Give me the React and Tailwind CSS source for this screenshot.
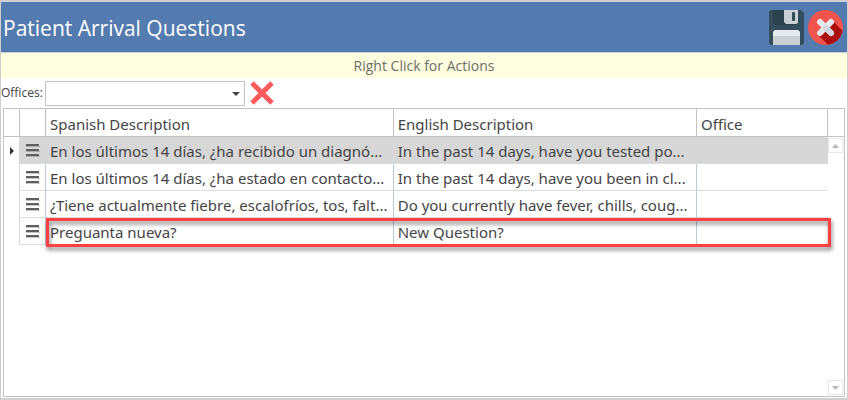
import { useState } from 'react';

const questions = [
  { id: 1, spanish: 'En los últimos 14 días, ¿ha recibido un diagnó...', english: 'In the past 14 days, have you tested po...', office: '' },
  { id: 2, spanish: 'En los últimos 14 días, ¿ha estado en contacto...', english: 'In the past 14 days, have you been in cl...', office: '' },
  { id: 3, spanish: '¿Tiene actualmente fiebre, escalofríos, tos, falt...', english: 'Do you currently have fever, chills, coug...', office: '' },
  { id: 4, spanish: 'Preguanta nueva?', english: 'New Question?', office: '', highlighted: true },
];

const SaveIcon = () => (
  <svg viewBox="0 0 35 35" className="block h-[35px] w-[35px]">
    <path d="M2 0H32L35 3V33L33 35H2L0 33V2Z" fill="#324d5b" />
    <path d="M4 0H29V13L27 15H6L4 13Z" fill="#2b414d" />
    <path d="M15 0H29V13L27 14H17L15 12Z" fill="#cbd0d4" />
    <rect x="23" y="2" width="3" height="9" rx="1" fill="#324d5b" />
    <path d="M4 22L6 20H29L31 22V35H4Z" fill="#cbd0d4" />
    <path d="M4 22L6 20H29L31 22V26H4Z" fill="#e6e9ee" />
  </svg>
);

const CloseIcon = () => (
  <svg viewBox="0 0 35 35" className="block h-[35px] w-[35px]">
    <circle cx="17.5" cy="17.5" r="17.5" fill="#f1544d" />
    <path d="M25 11L34.600 21A17.500 17.500 0 0 1 20 34.800L10 25Z" fill="#ad0e0e" />
    <path d="M12 12L23 23M23 12L12 23" stroke="#e6e9ee" strokeWidth="6" strokeLinecap="round" />
    <path d="M18 18L23 23" stroke="#d3d6db" strokeWidth="6" strokeLinecap="round" />
  </svg>
);

const ClearIcon = () => (
  <svg viewBox="0 0 24 24" className="block h-6 w-6">
    <path d="M2 2L22 22M22 2L2 22" stroke="#ff5a5c" strokeWidth="5" />
  </svg>
);

const MenuIcon = () => (
  <svg viewBox="0 0 14 13" className="block h-[13px] w-[14px]">
    <path d="M0 1H13M0 6H13M0 11H13" stroke="#5f5f61" strokeWidth="2" />
    <path d="M0 2.500H14M0 7.500H14M0 12.500H14" stroke="#5f5f61" strokeOpacity="0.35" />
  </svg>
);

const App = () => {
  const [selected, setSelected] = useState(1);

  return (
    <div className="flex min-h-screen flex-col border border-t-2 border-b-2 border-[#cfcfcf] bg-white font-['Open_Sans','Noto_Sans',sans-serif] text-[#444446]">
      {/* Title bar */}
      <header className="flex h-[51px] shrink-0 items-center border-b border-[#cfd3d8] bg-[#537bb0] pr-1 pl-[2px]">
        <h1 className="flex-1 pt-1 text-[21px] text-white">Patient Arrival Questions</h1>
        <div className="flex gap-1">
          <button type="button" aria-label="Save"><SaveIcon /></button>
          <button type="button" aria-label="Close"><CloseIcon /></button>
        </div>
      </header>

      <p className="h-[25px] shrink-0 bg-[#ffffdf] text-center text-[14px] leading-[26px] text-[#6d6d6d]">Right Click for Actions</p>

      {/* Office filter */}
      <div className="flex h-[30px] shrink-0 items-center">
        <label htmlFor="offices" className="w-11 text-[12px]">Offices:</label>
        <div className="relative">
          <select id="offices" className="block h-[25px] w-[200px] appearance-none border border-[#c2c2c2] bg-white px-2 text-[12px]">
            <option value=""></option>
          </select>
          <svg viewBox="0 0 8 4" className="pointer-events-none absolute top-[11px] right-[5px] h-1 w-2">
            <path d="M0 0H8L4 4Z" fill="#444446" />
          </svg>
        </div>
        <button type="button" aria-label="Clear office" className="ml-[5px]"><ClearIcon /></button>
      </div>

      {/* Questions grid */}
      <div className="mx-[2px] mb-[1px] flex flex-1 border border-[#c2c2c2]">
        <table className="flex-1 table-fixed border-separate border-spacing-0 self-start text-left font-['Noto_Sans','Open_Sans',sans-serif] text-[15px]">
          <colgroup>
            <col className="w-4" />
            <col className="w-[26px]" />
            <col className="w-[42.2%]" />
            <col className="w-[36.8%]" />
            <col />
          </colgroup>
          <thead>
            <tr className="h-7">
              <th className="border-r border-b border-[#c2c2c2] p-0"></th>
              <th className="border-r border-b border-[#c2c2c2] p-0"></th>
              <th className="border-r border-b border-[#c2c2c2] px-1 pt-1 pb-0 font-normal">Spanish Description</th>
              <th className="border-r border-b border-[#c2c2c2] px-1 pt-1 pb-0 font-normal">English Description</th>
              <th className="border-r border-b border-[#c2c2c2] px-1 pt-1 pb-0 font-normal">Office</th>
            </tr>
          </thead>
          <tbody>
            {questions.map((q) => {
              const active = selected === q.id;
              const cell = active
                ? 'border-r border-b border-r-[#d7d7d7] border-b-[#dcdcdc] bg-[#d7d7d7] px-1 pt-[2px] pb-0 whitespace-nowrap'
                : 'border-r border-b border-r-[#bccad8] border-b-[#dcdcdc] px-1 pt-[2px] pb-0 whitespace-nowrap';
              return (
                <tr key={q.id} className="relative h-[27px]" onClick={() => setSelected(q.id)}>
                  <td className="border-r border-[#d7d7d7] p-0">
                    {active && (
                      <svg viewBox="0 0 4 8" className="ml-[6px] block h-2 w-1">
                        <path d="M0 0L4 4L0 8Z" fill="#333333" />
                      </svg>
                    )}
                  </td>
                  <td className={active ? 'border-r border-b border-r-[#d7d7d7] border-b-[#dcdcdc] bg-[#d7d7d7] p-0' : 'border-r border-b border-r-[#bccad8] border-b-[#dcdcdc] p-0'}>
                    <button type="button" aria-label="Reorder question" className="ml-[6px] block"><MenuIcon /></button>
                  </td>
                  <td className={cell}>{q.spanish}</td>
                  <td className={cell}>{q.english}</td>
                  <td className={active ? 'border-b border-b-[#dcdcdc] bg-[#d7d7d7] p-0' : 'border-b border-b-[#dcdcdc] p-0'}>
                    {q.office}
                    {q.highlighted && (
                      <span className="pointer-events-none absolute top-0 -right-[3px] -bottom-[2px] left-[42px] border-3 border-[#ff4043] drop-shadow-[1px_3px_2px_rgba(0,0,0,0.5)]"></span>
                    )}
                  </td>
                </tr>
              );
            })}
          </tbody>
        </table>

        {/* Scroll bar */}
        <div className="flex w-4 flex-col">
          <div className="h-7 border-b border-[#c2c2c2]"></div>
          <button type="button" aria-label="Scroll up" className="mt-[1px] flex h-[15px] w-[15px] items-center justify-center border border-[#e6e6e6]">
            <svg viewBox="0 0 7 4" className="h-1 w-[7px]"><path d="M0 4L3.500 0L7 4Z" fill="#b8b8b8" /></svg>
          </button>
          <button type="button" aria-label="Scroll down" className="mt-auto mb-[1px] flex h-[15px] w-[15px] items-center justify-center border border-[#e6e6e6]">
            <svg viewBox="0 0 7 4" className="h-1 w-[7px]"><path d="M0 0L3.500 4L7 0Z" fill="#b8b8b8" /></svg>
          </button>
        </div>
      </div>
    </div>
  );
};

export default App;
